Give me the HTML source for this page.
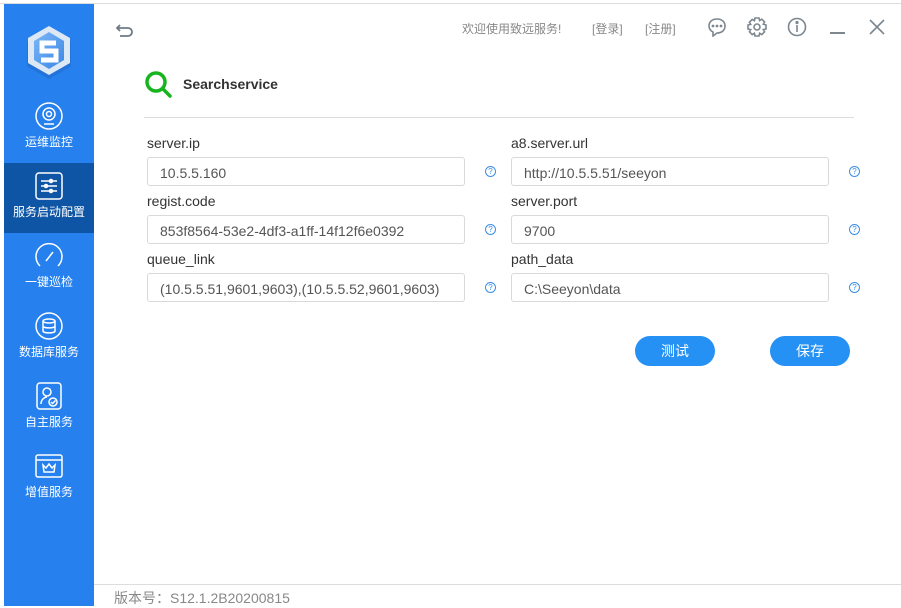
<!DOCTYPE html>
<html><head><meta charset="utf-8"><style>
*{margin:0;padding:0;box-sizing:border-box}
body{width:901px;height:606px;position:relative;overflow:hidden;background:#fff;font-family:"Liberation Sans","Noto Sans CJK SC",sans-serif}
.top{position:absolute;left:0;top:0;width:901px;height:4px;background:#fff;border-bottom:1px solid #ddd}
.side{position:absolute;left:4px;top:4px;width:90px;height:602px;background:#2680ee}
.item{position:absolute;left:0;width:90px;height:70px;color:#fff;font-size:12px;text-align:center}
.item svg{position:absolute;left:30px;top:8px}
.item span{position:absolute;left:0;right:0;top:40px;white-space:nowrap}
.act{background:#0f55a5}
.lbl{position:absolute;font-size:14px;color:#333}
.inp{position:absolute;height:29px;border:1px solid #d9d9d9;border-radius:3px;font-size:14px;color:#555;padding:7px 12px;white-space:nowrap}
.q{position:absolute;width:11px;height:11px;border:1px solid #3a8ee6;border-radius:50%;font-size:8px;color:#3a8ee6;text-align:center;line-height:10px}
.btn{position:absolute;top:336px;width:80px;height:30px;border-radius:15px;background:#2591f4;color:#fff;font-size:14px;text-align:center;line-height:30px}
.hd{position:absolute;top:20px;font-size:12px;color:#888}
</style></head><body>
<div class="top"></div>
<div class="side">
 <svg style="position:absolute;left:20px;top:20px" width="50" height="56" viewBox="0 0 50 56">
  <defs><linearGradient id="g" x1="0" y1="0" x2="1" y2="1"><stop offset="0" stop-color="#7db8f5"/><stop offset="1" stop-color="#3a86e6"/></linearGradient></defs>
  <polygon points="25,3 47,15.5 47,40.5 25,53 3,40.5 3,15.5" fill="#1c5fb5" opacity=".35" transform="translate(0,2)"/>
  <polygon points="25,2 46,14 46,39 25,51 4,39 4,14" fill="#dde8f5"/>
  <polygon points="25,8 40,17 40,36 25,45 10,36 10,17" fill="url(#g)"/>
  <path d="M32 19H18v8h14v9H17" stroke="#fff" stroke-width="5" fill="none"/>
 </svg>
 <div class="item" style="top:89px"><svg width="30" height="30" viewBox="0 0 30 30" fill="none" stroke="#fff" stroke-width="1.5"><circle cx="15" cy="15" r="13"/><circle cx="15" cy="13" r="6"/><circle cx="15" cy="13" r="2.5"/><path d="M10 23h10"/></svg><span>运维监控</span></div>
 <div class="item act" style="top:159px"><svg width="30" height="30" viewBox="0 0 30 30" fill="none" stroke="#fff" stroke-width="1.5"><rect x="2" y="2" width="26" height="26" rx="3"/><path d="M7 10h16M7 15h16M7 20h16"/><circle cx="17" cy="10" r="1.5"/><circle cx="12" cy="15" r="1.5"/><circle cx="17" cy="20" r="1.5"/></svg><span>服务启动配置</span></div>
 <div class="item" style="top:229px"><svg width="30" height="30" viewBox="0 0 30 30" fill="none" stroke="#fff" stroke-width="1.5"><path d="M6 25A13 13 0 1 1 24 25"/><path d="M12 20l7-9"/></svg><span>一键巡检</span></div>
 <div class="item" style="top:299px"><svg width="30" height="30" viewBox="0 0 30 30" fill="none" stroke="#fff" stroke-width="1.5"><circle cx="15" cy="15" r="13"/><ellipse cx="15" cy="10" rx="6" ry="2"/><path d="M9 10v10c0 2.5 12 2.5 12 0V10M9 15c0 2.5 12 2.5 12 0"/></svg><span>数据库服务</span></div>
 <div class="item" style="top:369px"><svg width="30" height="30" viewBox="0 0 30 30" fill="none" stroke="#fff" stroke-width="1.5"><rect x="3" y="2" width="24" height="26" rx="3"/><circle cx="13" cy="11" r="4"/><path d="M7 23c0-5 4-7 6-7"/><circle cx="19" cy="21" r="4"/><path d="M17 21l1.5 1.5 3-3"/></svg><span>自主服务</span></div>
 <div class="item" style="top:439px"><svg width="30" height="30" viewBox="0 0 30 30" fill="none" stroke="#fff" stroke-width="1.5"><rect x="2" y="4" width="26" height="22" rx="2"/><path d="M2 9h26M9 14l3 3 3-4 3 4 3-3-1 7h-10z"/></svg><span>增值服务</span></div>
</div>
<svg style="position:absolute;left:115px;top:22px" width="20" height="16" viewBox="0 0 20 16" fill="none" stroke="#6d7a85" stroke-width="1.8"><path d="M5 3l-3 3 3 3M2 6h11a4 4 0 0 1 0 8H5"/></svg>
<div class="hd" style="left:462px">欢迎使用致远服务!</div>
<div class="hd" style="left:592px">[登录]</div>
<div class="hd" style="left:645px">[注册]</div>
<svg style="position:absolute;left:707px;top:17px" width="20" height="20" viewBox="0 0 20 20" fill="none" stroke="#7d8790" stroke-width="1.6"><path d="M10 2c5 0 8 3 8 7s-3 7-8 7l-4 3v-4c-2-1-4-3-4-6 0-4 3-7 8-7z"/><circle cx="6" cy="9" r=".6" fill="#7d8790"/><circle cx="10" cy="9" r=".6" fill="#7d8790"/><circle cx="14" cy="9" r=".6" fill="#7d8790"/></svg>
<svg style="position:absolute;left:747px;top:17px" width="20" height="20" viewBox="0 0 20 20" fill="none" stroke="#7d8790" stroke-width="1.6"><path d="M8 1h4l.6 2.5 2.2-1.3 2.8 2.8-1.3 2.2L19 8v4l-2.7.6 1.3 2.2-2.8 2.8-2.2-1.3L12 19H8l-.6-2.7-2.2 1.3-2.8-2.8 1.3-2.2L1 12V8l2.7-.6-1.3-2.2 2.8-2.8 2.2 1.3z"/><circle cx="10" cy="10" r="3"/></svg>
<svg style="position:absolute;left:787px;top:17px" width="20" height="20" viewBox="0 0 20 20" fill="none" stroke="#7d8790" stroke-width="1.6"><circle cx="10" cy="10" r="8.5"/><path d="M10 8v7"/><circle cx="10" cy="5.5" r=".8" fill="#7d8790"/></svg>
<div style="position:absolute;left:830px;top:32px;width:15px;height:2px;background:#7d8790"></div>
<svg style="position:absolute;left:869px;top:19px" width="16" height="16" viewBox="0 0 16 16" stroke="#7d8790" stroke-width="1.6"><path d="M1 1l14 14M15 1L1 15"/></svg>
<svg style="position:absolute;left:144px;top:70px" width="30" height="30" viewBox="0 0 30 30" fill="none" stroke="#17b41e" stroke-width="3.5"><circle cx="12" cy="12" r="9"/><path d="M19 19l7 7" stroke-linecap="round"/></svg>
<div style="position:absolute;left:183px;top:76px;font-size:14px;font-weight:bold;color:#333">Searchservice</div>
<div style="position:absolute;left:144px;top:117px;width:710px;height:1px;background:#ddd"></div>
<div class="lbl" style="left:147px;top:135px">server.ip</div>
<div class="inp" style="left:147px;top:157px;width:318px">10.5.5.160</div>
<div class="q" style="left:485px;top:166px">?</div>
<div class="lbl" style="left:147px;top:193px">regist.code</div>
<div class="inp" style="left:147px;top:215px;width:318px">853f8564-53e2-4df3-a1ff-14f12f6e0392</div>
<div class="q" style="left:485px;top:224px">?</div>
<div class="lbl" style="left:147px;top:251px">queue_link</div>
<div class="inp" style="left:147px;top:273px;width:318px">(10.5.5.51,9601,9603),(10.5.5.52,9601,9603)</div>
<div class="q" style="left:485px;top:282px">?</div>
<div class="lbl" style="left:511px;top:135px">a8.server.url</div>
<div class="inp" style="left:511px;top:157px;width:318px">http://10.5.5.51/seeyon</div>
<div class="q" style="left:849px;top:166px">?</div>
<div class="lbl" style="left:511px;top:193px">server.port</div>
<div class="inp" style="left:511px;top:215px;width:318px">9700</div>
<div class="q" style="left:849px;top:224px">?</div>
<div class="lbl" style="left:511px;top:251px">path_data</div>
<div class="inp" style="left:511px;top:273px;width:318px">C:\Seeyon\data</div>
<div class="q" style="left:849px;top:282px">?</div>
<div class="btn" style="left:635px">测试</div>
<div class="btn" style="left:770px">保存</div>
<div style="position:absolute;left:94px;top:584px;width:807px;height:1px;background:#ddd"></div>
<div style="position:absolute;left:114px;top:588px;font-size:14px;color:#888">版本号：S12.1.2B20200815</div>
</body></html>
